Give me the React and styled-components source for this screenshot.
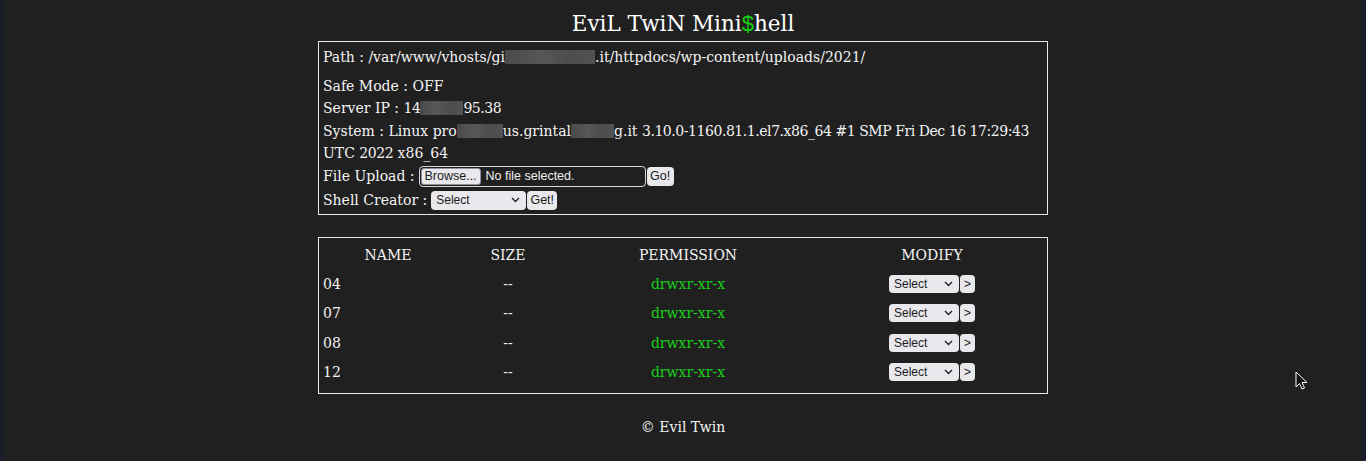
import React from "react";
import styled, { createGlobalStyle } from "styled-components";

const GlobalStyle = createGlobalStyle`
	html, body {
		margin: 0;
		padding: 0;
		background: #202020;
	}
	body {
		font-family: "DejaVu Serif", "Liberation Serif", serif;
		color: #f4f4f4;
	}
`;

const files = [
	{ name: "04", size: "--", perm: "drwxr-xr-x" },
	{ name: "07", size: "--", perm: "drwxr-xr-x" },
	{ name: "08", size: "--", perm: "drwxr-xr-x" },
	{ name: "12", size: "--", perm: "drwxr-xr-x" },
];

const Chevron = () => (
	<svg width="9" height="6" viewBox="0 0 9 6">
		<path d="M1 1 L4.5 4.5 L8 1" fill="none" stroke="#222" strokeWidth="1.4" />
	</svg>
);

const Dropdown = ({ width, height }) => (
	<SelectBox $w={width} $h={height}>
		<span>Select</span>
		<Chevron />
	</SelectBox>
);

export default function App() {
	return (
		<Page>
			<GlobalStyle />
			<Title>
				EviL TwiN Mini<Dollar>$</Dollar>hell
			</Title>

			<Panel>
				<PathLine>
					Path : /var/www/vhosts/gi<Blur $w={90} />.it/httpdocs/wp-content/uploads/2021/
				</PathLine>
				<Line>Safe Mode : OFF</Line>
				<Line>
					Server IP : <Num>14</Num>
					<Blur $w={43} />
					<Num>95.38</Num>
				</Line>
				<Line>
					System : Linux pro<Blur $w={46} />us.grintal<Blur $w={43} />g.it{" "}
					<Num>3.10.0-1160.81.1.el7.x86_64 #1 SMP Fri Dec 16 17:29:43</Num> UTC{" "}
					<Num>2022</Num> x86_64
				</Line>
				<ControlLine>
					File Upload :
					<FileBox>
						<BrowseBtn>Browse...</BrowseBtn>
						<FileName>No file selected.</FileName>
					</FileBox>
					<SmallBtn $w={27} $h={19}>Go!</SmallBtn>
				</ControlLine>
				<ControlLine $shell>
					Shell Creator :
					<Dropdown width={95} height={19} />
					<SmallBtn $w={30} $h={19}>Get!</SmallBtn>
				</ControlLine>
			</Panel>

			<TablePanel>
				<HeadRow>
					<HeadCell>NAME</HeadCell>
					<HeadCell>SIZE</HeadCell>
					<HeadCell>PERMISSION</HeadCell>
					<HeadCell $modify>MODIFY</HeadCell>
				</HeadRow>
				{files.map((f) => (
					<FileRow key={f.name}>
						<NameCell>{f.name}</NameCell>
						<SizeCell>{f.size}</SizeCell>
						<PermCell>{f.perm}</PermCell>
						<ModifyCell>
							<Dropdown width={70} height={18} />
							<SmallBtn $w={15} $h={18}>&gt;</SmallBtn>
						</ModifyCell>
					</FileRow>
				))}
			</TablePanel>

			<Footer>© Evil Twin</Footer>

			<Cursor width="14" height="20" viewBox="0 0 14 20">
				<path
					d="M1 1 L1 16 L4.5 12.5 L7 18 L9.5 17 L7 11.5 L12 11.5 Z"
					fill="#111"
					stroke="#fff"
					strokeWidth="1"
					strokeLinejoin="round"
				/>
			</Cursor>
		</Page>
	);
}

const Page = styled.div`
	position: relative;
	min-height: 461px;
	box-sizing: border-box;
	padding-top: 8px;
	border-left: 4px solid #1a1e2b;
	border-right: 4px solid #1a1e2b;
	display: flex;
	flex-direction: column;
	align-items: center;
`;

const Title = styled.div`
	font-size: 21.5px;
	line-height: 32px;
	height: 32px;
	margin-bottom: 1px;
	color: #fff;
`;

const Dollar = styled.span`
	color: #16d016;
	font-family: "Liberation Sans", Arial, sans-serif;
	font-size: 22px;
	line-height: 1;
`;

const Panel = styled.div`
	width: 730px;
	box-sizing: border-box;
	border: 1px solid #e8e8e8;
	padding: 4px 4px 2px;
	font-size: 14px;
	line-height: 22.5px;
`;

const PathLine = styled.div`
	margin-bottom: 6px;
`;

const Line = styled.div``;

const Num = styled.span`
	letter-spacing: -0.45px;
`;

const Blur = styled.span`
	display: inline-block;
	width: ${(p) => p.$w}px;
	height: 14px;
	vertical-align: -2px;
	background: linear-gradient(90deg, #4a4a4a, #575757 40%, #4d4d4d 70%, #525252);
	filter: blur(0.6px);
`;

const ControlLine = styled.div`
	display: flex;
	align-items: center;
	height: ${(p) => (p.$shell ? "24px" : "23.5px")};
	white-space: pre;
	& > :first-child {
		margin-left: 4px;
	}
`;

const controlFont = `
	font-family: "Liberation Sans", Arial, sans-serif;
	font-size: 12.5px;
	color: #1b1b1b;
`;

const FileBox = styled.span`
	display: inline-flex;
	align-items: center;
	box-sizing: border-box;
	width: 227px;
	height: 21px;
	border: 1px solid #d8d8d8;
	border-radius: 4px;
	padding: 1px;
	${controlFont};
`;

const FileName = styled.span`
	margin-left: 5px;
	color: #f0f0f0;
`;

const BrowseBtn = styled.span`
	display: inline-flex;
	align-items: center;
	justify-content: center;
	box-sizing: border-box;
	width: 60px;
	height: 100%;
	background: #e9e9ed;
	border: 1px solid #8f8f9d;
	border-radius: 3px;
	${controlFont};
`;

const SmallBtn = styled.span`
	display: inline-flex;
	align-items: center;
	justify-content: center;
	box-sizing: border-box;
	width: ${(p) => p.$w}px;
	height: ${(p) => p.$h}px;
	margin-left: 1px;
	background: #e9e9ed;
	border-radius: 4px;
	${controlFont};
`;

const SelectBox = styled.span`
	display: inline-flex;
	align-items: center;
	justify-content: space-between;
	box-sizing: border-box;
	width: ${(p) => p.$w}px;
	height: ${(p) => p.$h}px;
	padding: 0 6px 0 5px;
	background: #e9e9ed;
	border-radius: 4px;
	${controlFont};
	font-size: 12px;
`;

const TablePanel = styled.div`
	width: 730px;
	box-sizing: border-box;
	margin-top: 22px;
	border: 1px solid #e8e8e8;
	padding: 3px 4px 6px;
	font-size: 14px;
`;

const gridCols = `
	display: grid;
	grid-template-columns: 130px 110px 250px 1fr;
	align-items: center;
`;

const HeadRow = styled.div`
	${gridCols};
	height: 28px;
`;

const HeadCell = styled.div`
	text-align: center;
	padding-left: ${(p) => (p.$modify ? "8px" : "0")};
`;

const FileRow = styled.div`
	${gridCols};
	height: 29.5px;
`;

const NameCell = styled.div`
	text-align: left;
`;

const SizeCell = styled.div`
	text-align: center;
`;

const PermCell = styled.div`
	text-align: center;
	color: #19d219;
`;

const ModifyCell = styled.div`
	display: flex;
	justify-content: center;
	padding-left: 8px;
`;

const Footer = styled.div`
	margin-top: 23px;
	font-size: 14px;
	line-height: 20px;
`;

const Cursor = styled.svg`
	position: absolute;
	left: 1291px;
	top: 371px;
`;
